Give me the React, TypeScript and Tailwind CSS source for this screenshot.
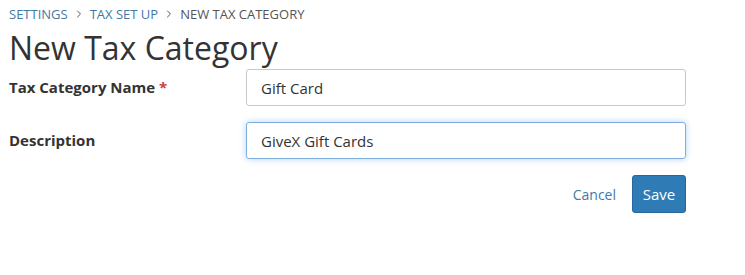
import { ChevronRight } from 'lucide-react';

export default function App() {
    return (
        <div
            className="min-h-[275px] w-[745px] bg-white text-[#333]"
            style={{ fontFamily: '"Open Sans", "Segoe UI", sans-serif' }}
        >
            <div className="pl-[9px] pt-[5px]">
                {/* breadcrumb */}
                <nav className="flex items-center text-[13px] uppercase leading-[18px]">
                    <a className="text-[#3f7aa5]">Settings</a>
                    <ChevronRight className="mx-[5px] h-[12px] w-[12px] text-[#555]" strokeWidth={2} />
                    <a className="text-[#3f7aa5]">Tax Set Up</a>
                    <ChevronRight className="mx-[5px] h-[12px] w-[12px] text-[#555]" strokeWidth={2} />
                    <span className="text-[#555]">New Tax Category</span>
                </nav>

                <h1 className="mt-[5px] text-[32px] leading-[40px] text-[#333]">New Tax Category</h1>
            </div>

            <form className="w-[686px] pl-[9px] pt-[1px]">
                <div className="flex h-[37px] items-center">
                    <label className="w-[237px] text-[15px] font-bold text-[#333]">
                        Tax Category Name <span className="text-[#c9413f]">*</span>
                    </label>
                    <input
                        className="h-[37px] flex-1 rounded-[3px] border border-[#c8c8c8] px-[14px] text-[15px] text-[#333] outline-none"
                        defaultValue="Gift Card"
                    />
                </div>

                <div className="mt-[16px] flex h-[37px] items-center">
                    <label className="w-[237px] text-[15px] font-bold text-[#333]">Description</label>
                    <input
                        className="h-[37px] flex-1 rounded-[3px] border border-[#7fb0dd] px-[14px] text-[15px] text-[#333] shadow-[0_0_6px_rgba(102,175,233,0.55)] outline-none"
                        defaultValue="GiveX Gift Cards"
                    />
                </div>

                <div className="mt-[16px] flex items-center justify-end">
                    <button type="button" className="mr-[16px] text-[14px] text-[#3f7aa5]">
                        Cancel
                    </button>
                    <button
                        type="button"
                        className="h-[38px] w-[54px] rounded-[3px] border border-[#26689d] bg-[#2e7bb6] text-[15px] text-white"
                    >
                        Save
                    </button>
                </div>
            </form>
        </div>
    );
}
